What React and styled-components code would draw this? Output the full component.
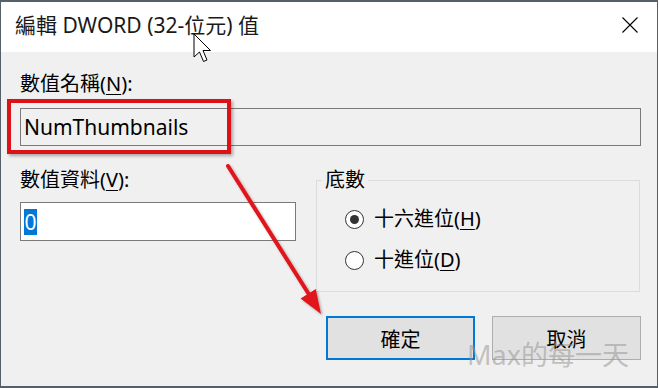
import React from 'react';
import styled, { createGlobalStyle } from 'styled-components';

const FONT = `"Noto Sans", "Noto Sans CJK TC", sans-serif`;

const Global = createGlobalStyle`
  html, body { margin: 0; padding: 0; background: #ffffff; }
  body { font-family: ${FONT}; }
`;

const Window = styled.div`
  position: relative;
  width: 658px;
  height: 388px;
  box-sizing: border-box;
  border: 1px solid #56606b;
  border-top-width: 2px;
  border-bottom-width: 2px;
  background: #f0f0f0;
  display: flex;
  flex-direction: column;
  overflow: hidden;
  font-family: ${FONT};
  color: #000;
`;

const TitleBar = styled.div`
  height: 50px;
  flex: none;
  background: #ffffff;
  display: flex;
  align-items: center;
  justify-content: space-between;
  padding: 0 19px 4px 14px;
  box-sizing: border-box;
`;

const Title = styled.div`
  font-size: 21px;
  line-height: 26px;
  color: #1a1a1a;
  white-space: nowrap;
`;

const CloseBtn = styled.div`
  width: 16px;
  height: 16px;
  display: flex;
`;

const Body = styled.div`
  flex: 1;
  display: flex;
  flex-direction: column;
  padding: 20px 16px 0 19px;
`;

const Label = styled.div`
  font-size: 20px;
  line-height: 24px;
  color: #000;
  white-space: nowrap;
`;

const Key = styled.span`
  text-decoration: underline;
  text-underline-offset: 3px;
  text-decoration-thickness: 1px;
`;

const TextField = styled.div`
  box-sizing: border-box;
  height: ${p => p.$h}px;
  width: ${p => (p.$w ? `${p.$w}px` : '100%')};
  margin-top: ${p => p.$mt}px;
  border: 1px solid #7a7a7a;
  background: ${p => (p.$readonly ? '#f0f0f0' : '#ffffff')};
  display: flex;
  align-items: center;
  padding-left: 3px;
  font-size: 21px;
  color: #000;
`;

const Selected = styled.span`
  background: #0078d7;
  color: #ffffff;
  line-height: 26px;
  padding: 0 0.5px;
`;

const Row = styled.div`
  display: flex;
  gap: 20px;
  margin-top: 22px;
`;

const LeftCol = styled.div`
  width: 276px;
  display: flex;
  flex-direction: column;
`;

const Group = styled.fieldset`
  margin: 0;
  padding: 0;
  width: 324px;
  height: 124px;
  box-sizing: border-box;
  border: 1px solid #dcdcdc;
`;

const Legend = styled.legend`
  font-size: 20px;
  line-height: 24px;
  padding: 0 3px;
  margin-left: 5px;
`;

const Options = styled.div`
  display: flex;
  flex-direction: column;
  padding-left: 28px;
`;

const RadioRow = styled.div`
  display: flex;
  align-items: center;
  gap: 10px;
  height: 24px;
  margin-top: ${p => p.$mt}px;
  font-size: 20px;
  line-height: 24px;
`;

const RadioCircle = styled.span`
  width: 19px;
  height: 19px;
  box-sizing: border-box;
  border-radius: 50%;
  border: 1px solid #333333;
  background: #ffffff;
  display: flex;
  align-items: center;
  justify-content: center;
  &::after {
    content: '';
    display: ${p => (p.$checked ? 'block' : 'none')};
    width: 9px;
    height: 9px;
    border-radius: 50%;
    background: #333333;
  }
`;

const Buttons = styled.div`
  display: flex;
  justify-content: flex-end;
  gap: 17px;
  margin-top: 24px;
`;

const Button = styled.div`
  box-sizing: border-box;
  width: 149px;
  height: 44px;
  background: #e1e1e1;
  border: ${p => (p.$default ? '2px solid #0078d7' : '1px solid #adadad')};
  display: flex;
  align-items: center;
  justify-content: center;
  font-size: 20px;
  color: #000;
`;

const RedBox = styled.div`
  position: absolute;
  left: 6px;
  top: 97px;
  width: 224px;
  height: 55px;
  box-sizing: border-box;
  border: 4.5px solid #dc1218;
  box-shadow: 2px 2px 3px rgba(0, 0, 0, 0.3);
  pointer-events: none;
`;

const Overlay = styled.svg`
  position: absolute;
  left: -1px;
  top: -2px;
  pointer-events: none;
`;

const Watermark = styled.div`
  position: absolute;
  left: 466px;
  top: 336px;
  font-size: 27px;
  line-height: 34px;
  color: rgba(150, 150, 150, 0.55);
  white-space: nowrap;
  pointer-events: none;
`;

export default function App() {
  return (
    <>
      <Global />
      <Window>
        <TitleBar>
          <Title>編輯 DWORD (32-位元) 值</Title>
          <CloseBtn>
            <svg width="16" height="16" viewBox="0 0 16 16">
              <path d="M0.5 0.5 L15.5 15.5 M15.5 0.5 L0.5 15.5" stroke="#000" strokeWidth="1.1" fill="none" />
            </svg>
          </CloseBtn>
        </TitleBar>
        <Body>
          <Label>數值名稱(<Key>N</Key>):</Label>
          <TextField $h={38} $mt={12} $readonly>NumThumbnails</TextField>
          <Row>
            <LeftCol>
              <Label>數值資料(<Key>V</Key>):</Label>
              <TextField $h={39} $w={276} $mt={10}>
                <Selected>0</Selected>
              </TextField>
            </LeftCol>
            <Group>
              <Legend>底數</Legend>
              <Options>
                <RadioRow $mt={15}>
                  <RadioCircle $checked />
                  <span>十六進位(<Key>H</Key>)</span>
                </RadioRow>
                <RadioRow $mt={17}>
                  <RadioCircle />
                  <span>十進位(<Key>D</Key>)</span>
                </RadioRow>
              </Options>
            </Group>
          </Row>
          <Buttons>
            <Button $default>確定</Button>
            <Button>取消</Button>
          </Buttons>
        </Body>
        <RedBox />
        <Overlay width="659" height="388" viewBox="0 0 659 388">
          <defs>
            <filter id="sh" x="-20%" y="-20%" width="140%" height="140%">
              <feDropShadow dx="1.5" dy="1.5" stdDeviation="1.2" floodColor="#000" floodOpacity="0.3" />
            </filter>
          </defs>
          <g filter="url(#sh)">
            <line x1="228" y1="166" x2="310" y2="296" stroke="#e0141a" strokeWidth="4" strokeLinecap="round" />
            <polygon points="321,314 300.6,298.5 315.8,288.9" fill="#e0141a" />
          </g>
          <path
            d="M194 34 L194 57 L199.5 52 L203.5 61.5 L207 60 L203 50.5 L210.5 50.5 Z"
            fill="#ffffff"
            stroke="#000000"
            strokeWidth="1"
            strokeLinejoin="miter"
          />
        </Overlay>
        <Watermark>Max的每一天</Watermark>
      </Window>
    </>
  );
}
